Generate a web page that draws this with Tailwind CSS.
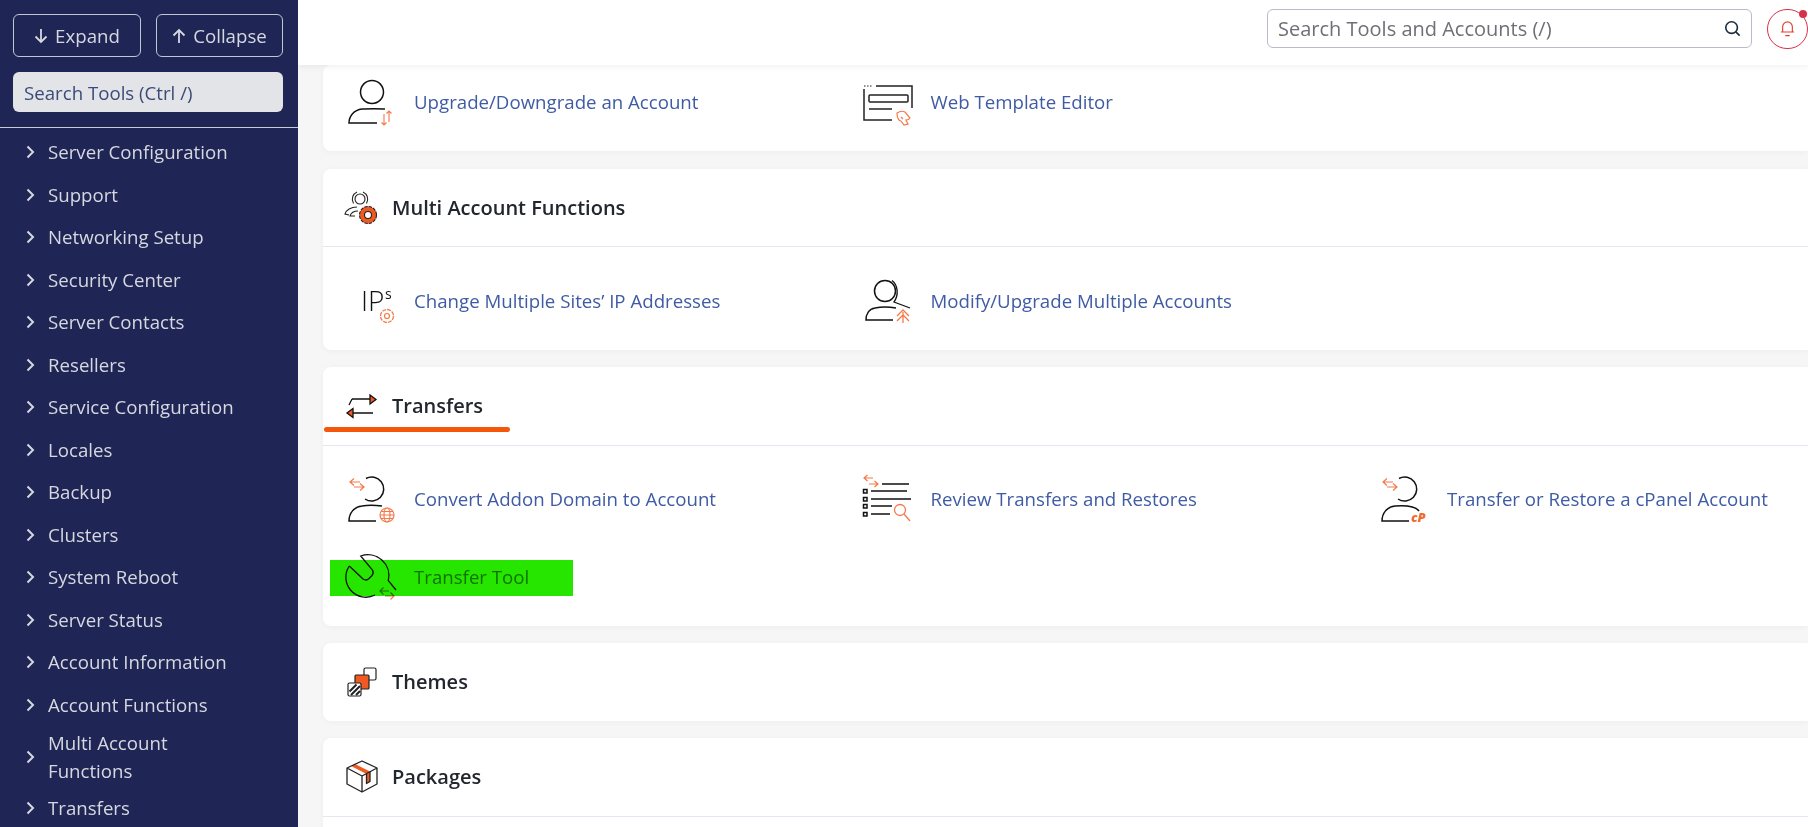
<!DOCTYPE html>
<html lang="en">
  <head>
    <meta charset="UTF-8" />
    <title>WHM</title>
    <script src="https://cdn.jsdelivr.net/npm/@tailwindcss/browser@4"></script>
  </head>
  <body class="flex h-screen overflow-hidden bg-[#f6f6f6] font-['Open_Sans',sans-serif]">

    <!-- Sidebar -->
    <aside class="w-[298px] h-screen shrink-0 overflow-hidden bg-[#1f2655] text-[#d6d8e0]">
      <div class="flex gap-[15px] px-[13px] pt-[14px]">
        <button class="flex items-center justify-center gap-[7px] w-[128px] h-[43px] border border-[#c4c6d4] rounded-md text-[18.67px]">
          <svg class="w-[14px] h-[16px]" viewBox="0 0 14 16" fill="none" stroke="currentColor" stroke-width="1.800"><path d="M7 1v13M1.500 8.500L7 14l5.500-5.500"/></svg>
          Expand
        </button>
        <button class="flex items-center justify-center gap-[7px] w-[127px] h-[43px] border border-[#c4c6d4] rounded-md text-[18.67px]">
          <svg class="w-[14px] h-[16px]" viewBox="0 0 14 16" fill="none" stroke="currentColor" stroke-width="1.800"><path d="M7 15V2M1.500 7.500L7 2l5.500 5.500"/></svg>
          Collapse
        </button>
      </div>
      <div class="px-[13px] mt-[15px]">
        <input placeholder="Search Tools (Ctrl /)" class="w-[270px] h-[40px] rounded-md bg-[#e3e4e8] px-[11px] text-[18.67px] placeholder:text-[#3c4a78] outline-none" />
      </div>
      <div class="mt-[15px] border-t border-[#c9cad6]"></div>
      <nav class="pt-[3px] pl-[26px] text-[18.67px]">
        <a class="flex items-center gap-[13px] h-[42.5px]"><svg class="w-[9px] h-[14px]" viewBox="0 0 9 14" fill="none" stroke="currentColor" stroke-width="2"><path d="M1.500 1.500L7 7l-5.500 5.500"/></svg>Server Configuration</a>
        <a class="flex items-center gap-[13px] h-[42.5px]"><svg class="w-[9px] h-[14px]" viewBox="0 0 9 14" fill="none" stroke="currentColor" stroke-width="2"><path d="M1.500 1.500L7 7l-5.500 5.500"/></svg>Support</a>
        <a class="flex items-center gap-[13px] h-[42.5px]"><svg class="w-[9px] h-[14px]" viewBox="0 0 9 14" fill="none" stroke="currentColor" stroke-width="2"><path d="M1.500 1.500L7 7l-5.500 5.500"/></svg>Networking Setup</a>
        <a class="flex items-center gap-[13px] h-[42.5px]"><svg class="w-[9px] h-[14px]" viewBox="0 0 9 14" fill="none" stroke="currentColor" stroke-width="2"><path d="M1.500 1.500L7 7l-5.500 5.500"/></svg>Security Center</a>
        <a class="flex items-center gap-[13px] h-[42.5px]"><svg class="w-[9px] h-[14px]" viewBox="0 0 9 14" fill="none" stroke="currentColor" stroke-width="2"><path d="M1.500 1.500L7 7l-5.500 5.500"/></svg>Server Contacts</a>
        <a class="flex items-center gap-[13px] h-[42.5px]"><svg class="w-[9px] h-[14px]" viewBox="0 0 9 14" fill="none" stroke="currentColor" stroke-width="2"><path d="M1.500 1.500L7 7l-5.500 5.500"/></svg>Resellers</a>
        <a class="flex items-center gap-[13px] h-[42.5px]"><svg class="w-[9px] h-[14px]" viewBox="0 0 9 14" fill="none" stroke="currentColor" stroke-width="2"><path d="M1.500 1.500L7 7l-5.500 5.500"/></svg>Service Configuration</a>
        <a class="flex items-center gap-[13px] h-[42.5px]"><svg class="w-[9px] h-[14px]" viewBox="0 0 9 14" fill="none" stroke="currentColor" stroke-width="2"><path d="M1.500 1.500L7 7l-5.500 5.500"/></svg>Locales</a>
        <a class="flex items-center gap-[13px] h-[42.5px]"><svg class="w-[9px] h-[14px]" viewBox="0 0 9 14" fill="none" stroke="currentColor" stroke-width="2"><path d="M1.500 1.500L7 7l-5.500 5.500"/></svg>Backup</a>
        <a class="flex items-center gap-[13px] h-[42.5px]"><svg class="w-[9px] h-[14px]" viewBox="0 0 9 14" fill="none" stroke="currentColor" stroke-width="2"><path d="M1.500 1.500L7 7l-5.500 5.500"/></svg>Clusters</a>
        <a class="flex items-center gap-[13px] h-[42.5px]"><svg class="w-[9px] h-[14px]" viewBox="0 0 9 14" fill="none" stroke="currentColor" stroke-width="2"><path d="M1.500 1.500L7 7l-5.500 5.500"/></svg>System Reboot</a>
        <a class="flex items-center gap-[13px] h-[42.5px]"><svg class="w-[9px] h-[14px]" viewBox="0 0 9 14" fill="none" stroke="currentColor" stroke-width="2"><path d="M1.500 1.500L7 7l-5.500 5.500"/></svg>Server Status</a>
        <a class="flex items-center gap-[13px] h-[42.5px]"><svg class="w-[9px] h-[14px]" viewBox="0 0 9 14" fill="none" stroke="currentColor" stroke-width="2"><path d="M1.500 1.500L7 7l-5.500 5.500"/></svg>Account Information</a>
        <a class="flex items-center gap-[13px] h-[42.5px]"><svg class="w-[9px] h-[14px]" viewBox="0 0 9 14" fill="none" stroke="currentColor" stroke-width="2"><path d="M1.500 1.500L7 7l-5.500 5.500"/></svg>Account Functions</a>
        <a class="flex items-center gap-[13px] h-[61px] leading-[28px]"><svg class="w-[9px] h-[14px]" viewBox="0 0 9 14" fill="none" stroke="currentColor" stroke-width="2"><path d="M1.500 1.500L7 7l-5.500 5.500"/></svg><span>Multi Account<br />Functions</span></a>
        <a class="flex items-center gap-[13px] h-[42.5px]"><svg class="w-[9px] h-[14px]" viewBox="0 0 9 14" fill="none" stroke="currentColor" stroke-width="2"><path d="M1.500 1.500L7 7l-5.500 5.500"/></svg>Transfers</a>
      </nav>
    </aside>

    <!-- Main Content -->
    <div class="flex-1 min-w-0 h-screen overflow-hidden">
      <!-- Topbar -->
      <header class="relative z-10 flex items-center justify-end gap-[15px] h-[65px] bg-white shadow-[0_2px_6px_rgba(0,0,0,0.06)]">
        <div class="flex items-center w-[485px] h-[39px] border border-[#b9bacb] rounded-md px-[10px] mb-[8px]">
          <input placeholder="Search Tools and Accounts (/)" class="flex-1 text-[20px] placeholder:text-[#6f7075] outline-none" />
          <svg class="w-[17px] h-[17px]" viewBox="0 0 19 19" fill="none" stroke="#1c2b3a" stroke-width="1.800"><circle cx="8.500" cy="8.500" r="6.500"/><path d="M13.200 13.200L17.500 17.500"/></svg>
        </div>
        <button class="relative w-[41px] h-[40px] mb-[8px] border border-[#d9304a] rounded-full flex items-center justify-center shrink-0">
          <svg class="w-[15px] h-[17px]" viewBox="0 0 17 19" fill="none" stroke="#e2402f" stroke-width="1.300"><path d="M3 13.500V7.500a5.500 5.500 0 0 1 11 0v6M1 13.500h15M6 17.500h5"/></svg>
          <span class="absolute top-[0px] right-[0px] w-[8px] h-[8px] rounded-full bg-[#d9304a]"></span>
        </button>
      </header>

      <main class="flex flex-col gap-[17px] pl-[25px]">
        <!-- Account top -->
        <section class="bg-white rounded-l-lg shadow-[0_1px_6px_rgba(0,0,0,0.04)] pl-[22px] pb-[10px] mb-[1px]">
          <div class="grid grid-cols-[repeat(3,516.500px)] text-[18.67px] text-[#3f5ba3] -mt-[2px]">
            <a class="flex items-center gap-[17px] h-[78px]">
              <svg class="w-[52px] h-[52px] overflow-visible shrink-0" viewBox="0 0 52 52" fill="none" stroke="#111" stroke-width="1.500">
                <circle cx="27" cy="16" r="11.500"/>
                <path d="M40 33C36 32.500 22 32.500 17 33C9 34 4 40 4 47H32"/>
                <path stroke="#f4794a" stroke-width="1.100" d="M44 46V35M41.500 37.500L44 35l2.500 2.500M39 38v11M36.500 46.500L39 49l2.500-2.500"/>
              </svg>
              Upgrade/Downgrade an Account
            </a>
            <a class="flex items-center gap-[17px] h-[78px]">
              <svg class="w-[52px] h-[52px] overflow-visible shrink-0" viewBox="0 0 52 52" fill="none" stroke="#222" stroke-width="1.500">
                <path d="M2 10h1.500M5 10h1.500M8 10h1.500" stroke-width="1.200"/>
                <path d="M14 10h36v22M2 13v31h28"/>
                <rect x="7" y="19" width="39" height="7" rx="1"/>
                <path d="M7 33h23"/>
                <path stroke="#f4794a" stroke-width="1.200" d="M35 37c3-2 6-2 8-1l5 6c-1 2-3 2-4 2l2 4-4 1-3-4c-3 0-4-5-4-8zM39 41l2 2"/>
              </svg>
              Web Template Editor
            </a>
          </div>
        </section>

        <!-- Multi Account Functions -->
        <section class="bg-white rounded-l-lg shadow-[0_1px_6px_rgba(0,0,0,0.04)]">
          <div class="flex items-center gap-[13px] h-[78px] pl-[20px] border-b border-[#e4e6f0] text-[20px] font-semibold text-[#22262e]">
            <svg class="w-[36px] h-[36px] overflow-visible shrink-0" viewBox="0 0 36 36" fill="none" stroke="#222" stroke-width="1.100">
              <circle cx="17" cy="9" r="5"/>
              <path d="M10.500 13.500A8 8 0 0 1 14 2M20 2A8 8 0 0 1 23.500 13.500"/>
              <path d="M14 17C8 17 3 20 2 24L6 25M15 21C11 21 8 23 7 26H12"/>
              <circle cx="25" cy="25" r="8.500" fill="#f05a22" stroke="#222" stroke-dasharray="3.500 1"/>
              <circle cx="25" cy="25" r="3.500" fill="#fff"/>
            </svg>
            Multi Account Functions
          </div>
          <div class="grid grid-cols-[repeat(3,516.500px)] pl-[22px] pt-[15px] pb-[10px] text-[18.67px] text-[#3f5ba3]">
            <a class="flex items-center gap-[17px] h-[78px]">
              <svg class="w-[52px] h-[52px] overflow-visible shrink-0" viewBox="0 0 52 52" fill="none">
                <text x="16" y="36" font-size="28" font-weight="300" fill="#111">IP</text>
                <text x="40" y="24" font-size="14" fill="#111">s</text>
                <circle cx="42" cy="41" r="6.500" stroke="#f4794a" stroke-width="1.300" stroke-dasharray="4 1"/>
                <circle cx="42" cy="41" r="2.500" stroke="#f4794a" stroke-width="1.200"/>
              </svg>
              Change Multiple Sites’ IP Addresses
            </a>
            <a class="flex items-center gap-[17px] h-[78px]">
              <svg class="w-[52px] h-[52px] overflow-visible shrink-0" viewBox="0 0 52 52" fill="none" stroke="#111" stroke-width="1.500">
                <circle cx="23" cy="16" r="10.500"/>
                <path d="M30 5.500C36 10 37 20 32 27L48 33" stroke-width="1.300"/>
                <path d="M34 33C28 32 18 32 13 33C7 34 4 39 4 45H31"/>
                <path stroke="#f4794a" stroke-width="1.300" d="M41 37v11M35 41l6-6 6 6M35 46l6-6 6 6"/>
              </svg>
              Modify/Upgrade Multiple Accounts
            </a>
          </div>
        </section>

        <!-- Transfers -->
        <section class="relative bg-white rounded-l-lg shadow-[0_1px_6px_rgba(0,0,0,0.04)]">
          <div class="relative flex items-center gap-[13px] h-[79px] pb-[1px] pl-[20px] border-b border-[#e4e6f0] text-[20px] font-semibold text-[#22262e]">
            <svg class="w-[36px] h-[36px] overflow-visible shrink-0" viewBox="0 0 36 36" fill="none" stroke="#111" stroke-width="1.300">
              <path d="M9 11h18M10 25h20M9 11l-3 6"/>
              <path d="M27 7l6 4.500-6 4.500z" fill="#f05a22"/>
              <path d="M10 20.500L4 25l6 4.500z" fill="#f05a22"/>
            </svg>
            Transfers
            <span class="absolute left-[1px] top-[60px] w-[186px] h-[5px] rounded-full bg-[#f4570a]"></span>
          </div>
          <div class="grid grid-cols-[repeat(3,516.500px)] pl-[22px] pt-[14px] pb-[10px] text-[18.67px] text-[#3f5ba3]">
            <a class="flex items-center gap-[17px] h-[78px]">
              <svg class="w-[52px] h-[52px] overflow-visible shrink-0" viewBox="0 0 52 52" fill="none" stroke="#111" stroke-width="1.500">
                <path d="M21 5.500A12 12 0 1 1 20 26"/>
                <path d="M37 33C30 32 22 32 17 33C9 34 4 40 4 48H31"/>
                <path stroke="#f4794a" stroke-width="1.200" d="M5 9h10M9 5.500L5 9l4 3.500M9 14h10M15 10.500L19 14l-4 3.500"/>
                <g stroke="#f4794a" stroke-width="1.200"><circle cx="42" cy="42" r="7"/><ellipse cx="42" cy="42" rx="3" ry="7"/><path d="M35 42h14M36 38.500h12M36 45.500h12"/></g>
              </svg>
              Convert Addon Domain to Account
            </a>
            <a class="flex items-center gap-[17px] h-[78px]">
              <svg class="w-[52px] h-[52px] overflow-visible shrink-0" viewBox="0 0 52 52" fill="none" stroke="#111" stroke-width="1.500">
                <path stroke="#f4794a" stroke-width="1.200" d="M2 5h9M5.500 2L2 5l3.500 3M7 11h9M12.500 8l3.500 3-3.500 3"/>
                <path d="M20 11h27M9 18h36M9 26h40M9 33h21M9 41h19"/>
                <rect x="1.500" y="16.500" width="3.500" height="3.500"/>
                <rect x="1.500" y="24.500" width="3.500" height="3.500"/>
                <rect x="1.500" y="31.500" width="3.500" height="3.500"/>
                <rect x="1.500" y="39.500" width="3.500" height="3.500"/>
                <circle cx="38" cy="37" r="5.500" stroke="#f4794a" stroke-width="1.300"/>
                <path d="M42 41l6 7" stroke="#f4794a" stroke-width="1.300"/>
              </svg>
              Review Transfers and Restores
            </a>
            <a class="flex items-center gap-[17px] h-[78px]">
              <svg class="w-[52px] h-[52px] overflow-visible shrink-0" viewBox="0 0 52 52" fill="none" stroke="#111" stroke-width="1.500">
                <path d="M21 5.500A12 12 0 1 1 20 26"/>
                <path d="M41 38C38 34 30 32 17 33C9 34 4 40 4 48H31"/>
                <path stroke="#f4794a" stroke-width="1.200" d="M5 9h10M9 5.500L5 9l4 3.500M9 14h10M15 10.500L19 14l-4 3.500"/>
                <text x="33" y="49" font-size="13" font-weight="800" font-style="italic" fill="#f26a33" stroke="none">cP</text>
              </svg>
              Transfer or Restore a cPanel Account
            </a>
            <a class="flex items-center gap-[17px] h-[78px] text-[#5a80c0]">
              <svg class="w-[52px] h-[52px] overflow-visible shrink-0" viewBox="0 0 52 52" fill="none" stroke="#111" stroke-width="1.300">
                <path d="M4.300 15A20 20 0 0 0 30 44"/>
                <path d="M4.300 15L18.300 28.300Q21.500 30 24 27.500L27 24.500Q29 22 27.500 19L15.700 5A21 21 0 0 1 43.300 29.700L51 39"/>
                <path stroke="#f4794a" stroke-width="1.200" d="M35 40h9M38.500 36.500L35 40l3.500 3.500M40 45h9M45.500 41.500L49 45l-3.500 3.500"/>
              </svg>
              Transfer Tool
            </a>
          </div>
          <!-- Highlight over the Transfer Tool row -->
          <div class="absolute left-[7px] top-[193px] w-[243px] h-[36px] bg-[#26e600] mix-blend-multiply"></div>
        </section>

        <!-- Themes -->
        <section class="bg-white rounded-l-lg shadow-[0_1px_6px_rgba(0,0,0,0.04)]">
          <div class="flex items-center gap-[13px] h-[78px] pl-[20px] text-[20px] font-semibold text-[#22262e]">
            <svg class="w-[36px] h-[36px] overflow-visible shrink-0" viewBox="0 0 36 36" fill="none" stroke="#222" stroke-width="1.200">
              <rect x="21" y="4" width="12" height="12" rx="1.500" fill="#fff"/>
              <rect x="12" y="11" width="14" height="14" rx="1" fill="#f05a22"/>
              <rect x="5" y="19" width="13" height="13" rx="1.500" fill="#fff"/>
              <path d="M6.500 27.500l7-7M8 31l9-9M13 31l4-4" stroke-width="2"/>
            </svg>
            Themes
          </div>
        </section>

        <!-- Packages -->
        <section class="bg-white rounded-l-lg shadow-[0_1px_6px_rgba(0,0,0,0.04)]">
          <div class="flex items-center gap-[13px] h-[79px] pb-[1px] pl-[20px] border-b border-[#e4e6f0] text-[20px] font-semibold text-[#22262e]">
            <svg class="w-[36px] h-[36px] overflow-visible shrink-0" viewBox="0 0 36 36" fill="none" stroke="#222" stroke-width="1.300" stroke-linejoin="round">
              <path d="M12 5L27 12.500V22.500L23.500 24.500V15L9 7.500z" fill="#f05a22" stroke="none"/>
              <path d="M19 2L34 9V25L19 33L4 25V9zM4 9L19 17L34 9M19 17V33"/>
              <path d="M27 12.500V22.500L23.500 24.500V15"/>
            </svg>
            Packages
          </div>
          <div class="h-[40px]"></div>
        </section>
      </main>
    </div>
  </body>
</html>
